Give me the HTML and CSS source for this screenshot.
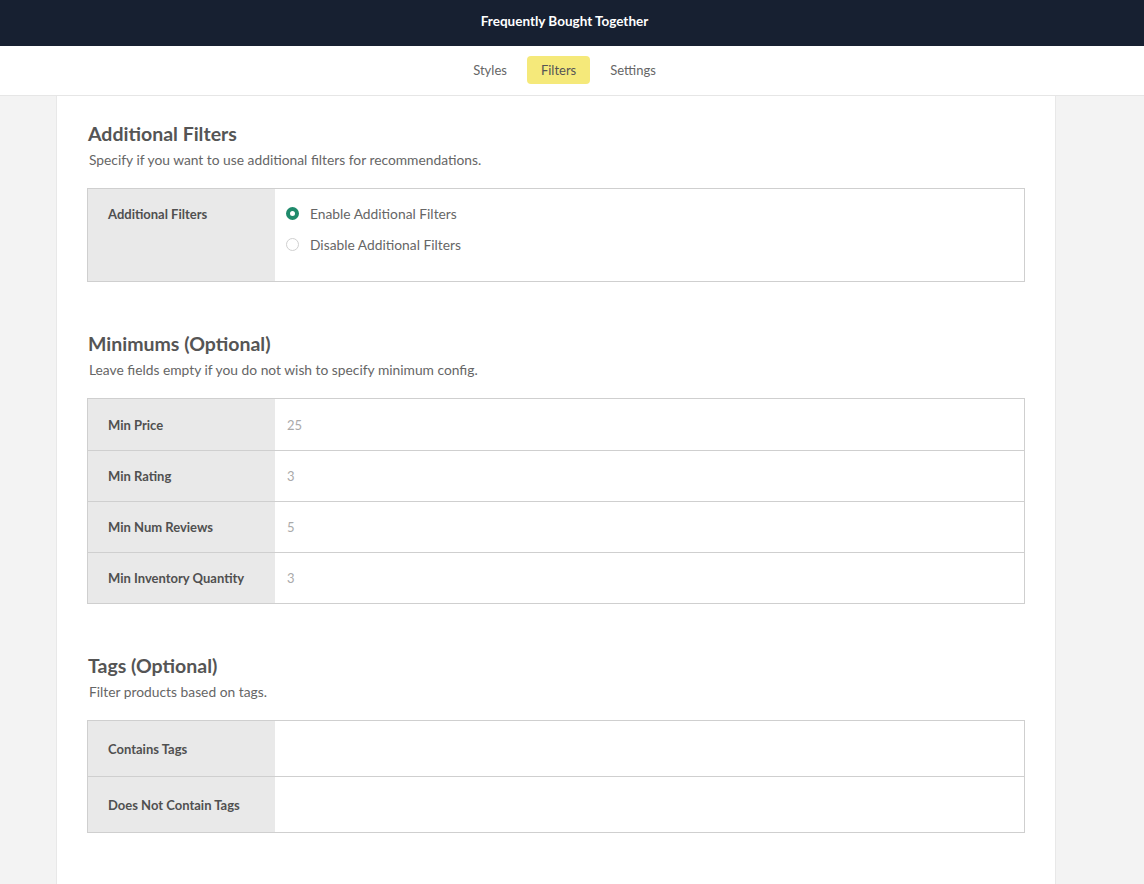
FILE: index.html
```
<!DOCTYPE html>
<html>
<head>
<meta charset="utf-8">
<title>Frequently Bought Together</title>
<link rel="stylesheet" href="styles.css">
</head>
<body>
<header class="topbar">Frequently Bought Together</header>
<nav class="tabs">
  <a class="tab">Styles</a>
  <a class="tab active">Filters</a>
  <a class="tab">Settings</a>
</nav>
<main class="page">
  <section class="panel">
    <div class="section">
      <h2>Additional Filters</h2>
      <p class="desc">Specify if you want to use additional filters for recommendations.</p>
      <div class="table">
        <div class="row row-radio">
          <div class="label">Additional Filters</div>
          <div class="value radios">
            <label class="radio"><span class="dot checked"></span>Enable Additional Filters</label>
            <label class="radio"><span class="dot"></span>Disable Additional Filters</label>
          </div>
        </div>
      </div>
    </div>
    <div class="section">
      <h2>Minimums (Optional)</h2>
      <p class="desc">Leave fields empty if you do not wish to specify minimum config.</p>
      <div class="table">
        <div class="row row-min"><div class="label">Min Price</div><div class="value field">25</div></div>
        <div class="row row-min"><div class="label">Min Rating</div><div class="value field">3</div></div>
        <div class="row row-min"><div class="label">Min Num Reviews</div><div class="value field">5</div></div>
        <div class="row row-min"><div class="label">Min Inventory Quantity</div><div class="value field">3</div></div>
      </div>
    </div>
    <div class="section">
      <h2>Tags (Optional)</h2>
      <p class="desc">Filter products based on tags.</p>
      <div class="table">
        <div class="row row-tag"><div class="label">Contains Tags</div><div class="value"></div></div>
        <div class="row row-tag"><div class="label">Does Not Contain Tags</div><div class="value"></div></div>
      </div>
    </div>
  </section>
</main>
</body>
</html>
```
FILE: styles.css
```
* { box-sizing: border-box; }
html, body { margin: 0; padding: 0; }
body {
  background: #f3f3f3;
  font-family: "Lato", "Open Sans", sans-serif;
  color: #666;
  height: 884px;
  overflow: hidden;
}
.topbar {
  background: #172031;
  color: #fff;
  height: 46px;
  display: flex;
  align-items: center;
  justify-content: center;
  font-size: 13.5px;
  font-weight: 700;
  padding-right: 15px;
  padding-bottom: 4px;
}
.tabs {
  background: #fff;
  height: 50px;
  border-bottom: 1px solid #e6e6e6;
  display: flex;
  align-items: center;
  justify-content: center;
  gap: 6px;
  padding-right: 15px;
  padding-bottom: 2px;
}
.tab {
  font-size: 13px;
  color: #666;
  padding: 0 14px;
  height: 28px;
  line-height: 28px;
  border-radius: 4px;
}
.tab.active { background: #f5e97a; color: #555; }
.page {
  display: flex;
  padding-left: 56px;
}
.panel {
  width: 1000px;
  background: #fff;
  border-left: 1px solid #e8e8e8;
  border-right: 1px solid #e8e8e8;
  padding: 22px 30px 40px 30px;
  min-height: 800px;
}
.section { margin-bottom: 46px; }
h2 {
  margin: 0;
  padding-left: 1px;
  font-size: 19.5px;
  font-weight: 700;
  color: #555;
  line-height: 32px;
}
.desc {
  margin: 0 0 18px 0;
  padding-left: 2px;
  font-size: 13.8px;
  color: #666;
  line-height: 20px;
}
.table { border: 1px solid #cfcfcf; }
.row { display: flex; }
.row + .row { border-top: 1px solid #cfcfcf; }
.label {
  width: 187px;
  flex: none;
  background: #e9e9e9;
  font-size: 13px;
  font-weight: 700;
  color: #505050;
  padding-left: 20px;
  display: flex;
  align-items: center;
}
.value { flex: 1; background: #fff; }
.row-radio { height: 92px; }
.row-radio .label { align-items: flex-start; padding-top: 17px; }
.radios {
  padding: 14px 12px;
  display: flex;
  flex-direction: column;
  gap: 11px;
}
.radio {
  display: flex;
  align-items: center;
  font-size: 13.8px;
  color: #666;
  height: 20px;
}
.dot {
  width: 13px;
  height: 13px;
  border-radius: 50%;
  border: 1px solid #d0d0d0;
  background: #fff;
  margin-left: -1px;
  margin-right: 11px;
  box-sizing: border-box;
}
.dot.checked {
  border: 4px solid #1f8a6b;
  background: #fff;
}
.row-min { height: 51px; }
.field {
  font-size: 13px;
  color: #aaa;
  display: flex;
  align-items: center;
  padding-left: 12px;
}
.row-tag { height: 55px; }
.row-tag + .row-tag { height: 56px; }
```
